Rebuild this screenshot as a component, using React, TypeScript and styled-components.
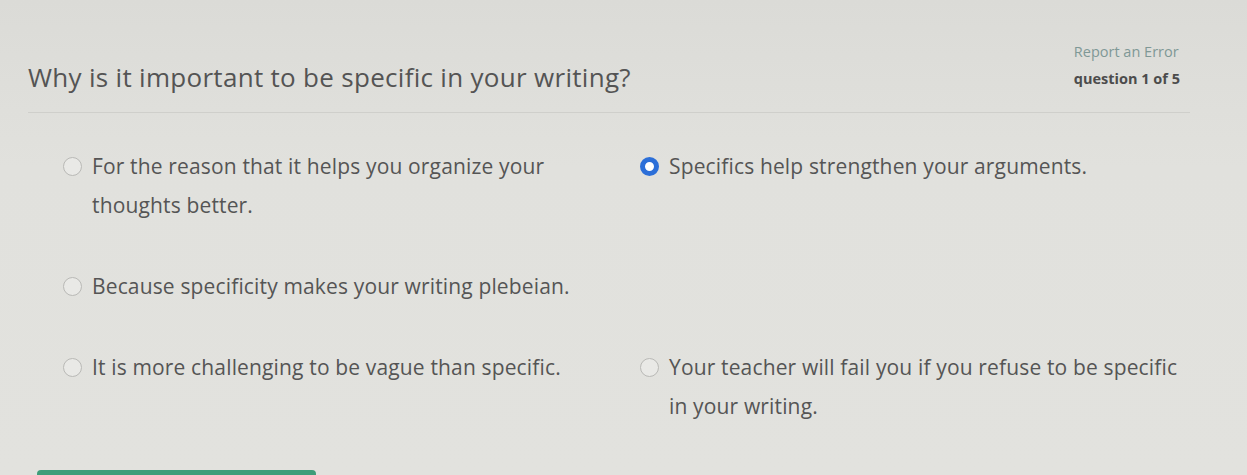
import React from "react";
import styled, { createGlobalStyle } from "styled-components";

const GlobalStyle = createGlobalStyle`
  html, body {
    margin: 0;
    padding: 0;
    background: #dfdfdb;
    overflow: hidden;
  }
  body {
    font-family: "Open Sans", "Noto Sans", sans-serif;
  }
`;

const Page = styled.div`
  width: 1247px;
  height: 475px;
  box-sizing: border-box;
  padding-top: 38px;
  background: linear-gradient(180deg, #dbdbd7 0%, #e1e1dd 35%, #e2e2de 100%);
  display: flex;
  flex-direction: column;
`;

const Header = styled.header`
  display: flex;
  justify-content: space-between;
  align-items: flex-end;
  margin: 0 57px 0 28px;
  padding-bottom: 20px;
  border-bottom: 1px solid #cfcfcb;
`;

const Title = styled.h1`
  margin: 0;
  font-size: 26px;
  line-height: 30px;
  letter-spacing: 0.3px;
  font-weight: 400;
  color: #545454;
`;

const Meta = styled.div`
  display: flex;
  flex-direction: column;
  align-items: flex-start;
  margin-right: 10px;
`;

const ReportLink = styled.a`
  font-size: 14.5px;
  line-height: 27px;
  color: #7f9896;
  text-decoration: none;
`;

const Counter = styled.span`
  font-size: 14.5px;
  line-height: 27px;
  font-weight: 700;
  color: #4c4c4c;
`;

const Options = styled.div`
  display: grid;
  grid-template-columns: 577px 1fr;
  row-gap: 42px;
  padding: 34px 57px 0 63px;
`;

const Option = styled.label<{ $side: "left" | "right" }>`
  display: flex;
  align-items: flex-start;
  gap: 10px;
  padding-right: ${(p) => (p.$side === "left" ? "50px" : "0")};
  grid-column: ${(p) => (p.$side === "left" ? 1 : 2)};
  cursor: pointer;
`;

const Radio = styled.span<{ $checked?: boolean }>`
  flex: none;
  width: 19px;
  height: 19px;
  margin-top: 10px;
  border-radius: 50%;
  box-sizing: border-box;
  border: ${(p) => (p.$checked ? "5px solid #2c6fd8" : "1px solid #b9b9b6")};
  background: ${(p) => (p.$checked ? "#ffffff" : "#e9e9e6")};
`;

const OptionText = styled.span`
  font-size: 21px;
  line-height: 39px;
  letter-spacing: 0.15px;
  color: #555555;
`;

const Footer = styled.div`
  margin-top: auto;
  margin-left: 37px;
  width: 279px;
  height: 5px;
  border-radius: 4px 4px 0 0;
  background: #3f9d7a;
`;

type Choice = { text: string; side: "left" | "right"; checked?: boolean };

const rows: Choice[][] = [
  [
    { text: "For the reason that it helps you organize your thoughts better.", side: "left" },
    { text: "Specifics help strengthen your arguments.", side: "right", checked: true },
  ],
  [{ text: "Because specificity makes your writing plebeian.", side: "left" }],
  [
    { text: "It is more challenging to be vague than specific.", side: "left" },
    {
      text: "Your teacher will fail you if you refuse to be specific in your writing.",
      side: "right",
    },
  ],
];

export default function App() {
  return (
    <>
      <GlobalStyle />
      <Page>
        <Header>
          <Title>Why is it important to be specific in your writing?</Title>
          <Meta>
            <ReportLink href="#">Report an Error</ReportLink>
            <Counter>question 1 of 5</Counter>
          </Meta>
        </Header>
        <Options>
          {rows.map((row, i) =>
            row.map((c) => (
              <Option key={`${i}-${c.side}`} $side={c.side} style={{ gridRow: i + 1 }}>
                <Radio $checked={c.checked} />
                <OptionText>{c.text}</OptionText>
              </Option>
            ))
          )}
        </Options>
        <Footer />
      </Page>
    </>
  );
}
